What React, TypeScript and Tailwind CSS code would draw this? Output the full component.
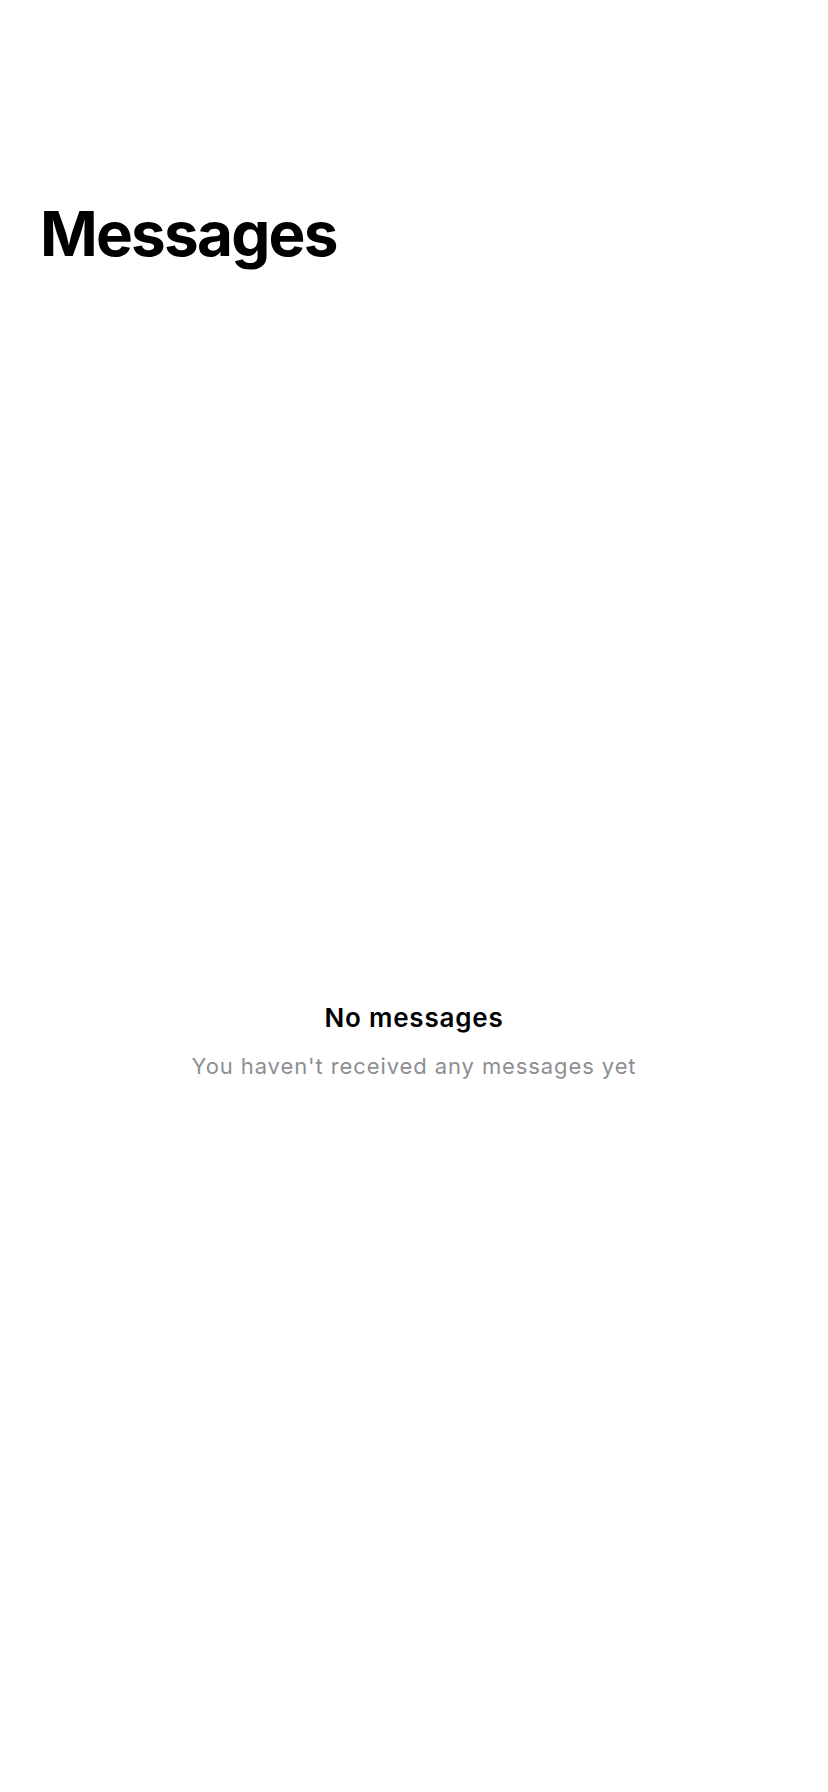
import React from 'react';

const font = { fontFamily: 'Inter, "Noto Sans", sans-serif' };

export default function App() {
  return (
    <div className="min-h-screen w-full bg-white text-black" style={font}>
      <div className="px-[40px] pt-[203px]">
        <h1 className="text-[62px] leading-[62px] font-bold tracking-[-1.8px]">Messages</h1>
      </div>

      <div className="mt-[737px] flex flex-col items-center text-center">
        <h2 className="text-[26px] leading-[32px] font-semibold tracking-[0.8px]">No messages</h2>
        <p className="mt-[18px] text-[22px] leading-[28px] tracking-[0.9px] text-[#8e8e93]">You haven't received any messages yet</p>
      </div>
    </div>
  );
}
